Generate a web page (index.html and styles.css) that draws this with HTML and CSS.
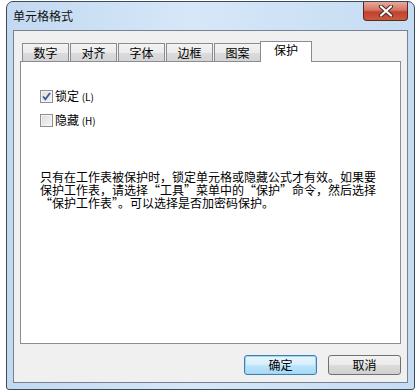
FILE: index.html
```html
<!DOCTYPE html>
<html lang="zh-CN">
<head>
  <meta charset="UTF-8">
  <title>单元格格式</title>
  <link rel="stylesheet" href="styles.css">
</head>
<body>

  <div class="window">
    <div class="titlebar">
      <span class="title">单元格格式</span>
      <button class="close-btn" aria-label="关闭">
        <svg width="16" height="12" viewBox="0 0 16 12">
          <path d="M3 1.5 L13 10.5 M13 1.5 L3 10.5" stroke="#4b2a26" stroke-width="4.2" stroke-linecap="round"/>
          <path d="M3 1.5 L13 10.5 M13 1.5 L3 10.5" stroke="#ffffff" stroke-width="2.2" stroke-linecap="round"/>
        </svg>
      </button>
    </div>

    <div class="client">
      <div class="tabs">
        <div class="tab">数字</div>
        <div class="tab">对齐</div>
        <div class="tab">字体</div>
        <div class="tab">边框</div>
        <div class="tab">图案</div>
        <div class="tab active">保护</div>
      </div>

      <div class="panel">
        <label class="check-row">
          <span class="checkbox checked">
            <svg width="9" height="9" viewBox="0 0 9 9">
              <path d="M1 4.5 L3.4 7.2 L8 1" fill="none" stroke="#3d58a0" stroke-width="1.8"/>
            </svg>
          </span>
          <span>锁定 <span class="key">(L)</span></span>
        </label>
        <label class="check-row">
          <span class="checkbox"></span>
          <span>隐藏 <span class="key">(H)</span></span>
        </label>

        <p class="note">
          只有在工作表被保护时，锁定单元格或隐藏公式才有效。如果要<br>
          保护工作表，请选择“工具”菜单中的“保护”命令，然后选择<br>
          “保护工作表”。可以选择是否加密码保护。
        </p>
      </div>

      <div class="buttons">
        <button class="btn default">确定</button>
        <button class="btn">取消</button>
      </div>
    </div>
  </div>

</body>
</html>
```

FILE: styles.css
```css
body {
  margin: 0;
  padding: 0;
  background: #ffffff;
  font-family: "Noto Sans CJK SC", "Noto Sans", sans-serif;
  font-size: 12px;
  color: #000;
}
.window {
  box-sizing: border-box;
  margin: 1px 0 0 6px;
  width: 409px;
  height: 389px;
  border: 1px solid #3b4b5d;
  border-radius: 7px 7px 3px 3px;
  background: linear-gradient(to right, #c2d9f1, #d6e7f8 45%, #c6dcf3);
  display: flex;
  flex-direction: column;
}
.titlebar {
  height: 28px;
  display: flex;
  justify-content: space-between;
  align-items: flex-start;
  padding-left: 6px;
}
.title {
  margin-top: 6px;
  font-size: 12px;
  line-height: 16px;
  color: #111;
}
.close-btn {
  width: 45px;
  height: 19px;
  margin-right: 6px;
  padding: 0;
  border: 1px solid #5b2720;
  border-top: none;
  border-radius: 0 0 4px 4px;
  background: linear-gradient(to bottom, #e9a99b, #d37665 45%, #c2412f 55%, #c85a3d);
  display: flex;
  align-items: center;
  justify-content: center;
}
.client {
  box-sizing: border-box;
  margin: 0 6px 6px 6px;
  flex: 1;
  border: 1px solid #76828f;
  background: #f0f0f0;
  padding: 10px 6px 0 6px;
}
.tabs {
  display: flex;
  align-items: flex-end;
  height: 20px;
  padding-left: 2px;
  position: relative;
  z-index: 1;
}
.tab {
  box-sizing: border-box;
  width: 47px;
  height: 18px;
  margin-right: 1px;
  border: 1px solid #898c95;
  border-bottom: none;
  background: linear-gradient(to bottom, #f3f3f3, #ebebeb 50%, #dcdcdc 50%, #d4d4d4);
  text-align: center;
  line-height: 17px;
}
.tab.active {
  width: 52px;
  height: 21px;
  margin: 0 0 -1px -2px;
  background: #ffffff;
  line-height: 15px;
}
.panel {
  box-sizing: border-box;
  height: 283px;
  border: 1px solid #898c95;
  background: #ffffff;
  padding: 27px 0 0 19px;
}
.check-row {
  display: flex;
  align-items: center;
  gap: 2px;
  height: 14px;
  margin-bottom: 10px;
  line-height: 14px;
}
.checkbox {
  box-sizing: border-box;
  width: 13px;
  height: 13px;
  border: 1px solid #8e8f8f;
  background: linear-gradient(135deg, #dcdcdc, #f6f6f6);
  box-shadow: inset 0 0 0 1px #f4f4f4;
  display: flex;
  align-items: center;
  justify-content: center;
}
.key {
  font-size: 10px;
}
.note {
  margin: 43px 0 0 0;
  line-height: 13px;
  font-size: 12px;
}
.buttons {
  display: flex;
  justify-content: flex-end;
  gap: 11px;
  margin-top: 11px;
  padding-right: 0;
}
.btn {
  box-sizing: border-box;
  width: 73px;
  height: 20px;
  padding: 0;
  border: 1px solid #707070;
  border-radius: 3px;
  background: linear-gradient(to bottom, #f2f2f2, #ebebeb 50%, #dddddd 50%, #cfcfcf);
  font-family: inherit;
  font-size: 12px;
  line-height: 16px;
  color: #000;
}
.btn.default {
  border-color: #3c7fb1;
  background: linear-gradient(to bottom, #e8f6fd, #d6eefb 50%, #bee6fd 50%, #a7d9f5);
  box-shadow: inset 0 0 0 1px #9fd6f5;
}
```
